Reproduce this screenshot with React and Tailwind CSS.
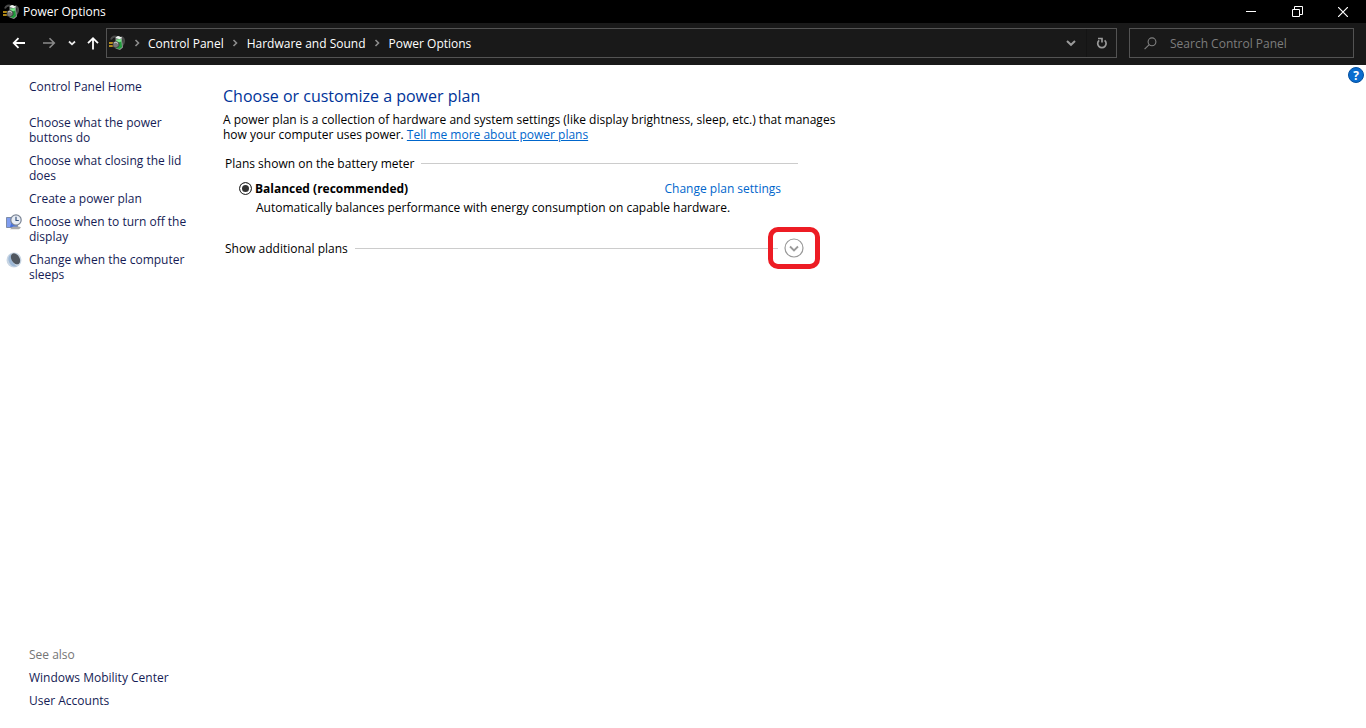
import { useState } from "react";

const breadcrumbs = ["Control Panel", "Hardware and Sound", "Power Options"];

const tasks = [
  { lines: ["Choose what the power", "buttons do"] },
  { lines: ["Choose what closing the lid", "does"] },
  { lines: ["Create a power plan"] },
  { lines: ["Choose when to turn off the", "display"], icon: DisplayClockIcon },
  { lines: ["Change when the computer", "sleeps"], icon: MoonIcon },
];

export default function App() {
  return (
    <div className="flex min-h-screen flex-col bg-white font-['Open_Sans','Noto_Sans',sans-serif] text-[12px] leading-[15px] text-black">
      <TitleBar />
      <NavigationBar />
      <div className="relative flex flex-1">
        <Sidebar />
        <PowerPlans />
        <button aria-label="Help" className="absolute top-[2px] right-[2px]">
          <HelpIcon />
        </button>
      </div>
    </div>
  );
}

function TitleBar() {
  return (
    <header className="flex h-[23px] items-center bg-black text-white">
      <div className="flex flex-1 items-center gap-1 pl-[3px]">
        <PowerIcon />
        <span>Power Options</span>
      </div>
      <button aria-label="Minimize" className="flex h-full w-[46px] items-center justify-center">
        <svg width="10" height="10" viewBox="0 0 10 10"><path d="M0 4.5h10" stroke="#fff" /></svg>
      </button>
      <button aria-label="Restore" className="flex h-full w-[46px] items-center justify-center">
        <svg width="11" height="11" viewBox="0 0 11 11" fill="none" stroke="#fff">
          <path d="M.5 3.5h7v7h-7zM2.5 3.5v-3h8v8h-3" />
        </svg>
      </button>
      <button aria-label="Close" className="flex h-full w-[46px] items-center justify-center">
        <svg width="10" height="10" viewBox="0 0 10 10"><path d="M0 0l10 10M10 0L0 10" stroke="#fff" strokeWidth="1.2" /></svg>
      </button>
    </header>
  );
}

function NavigationBar() {
  return (
    <nav className="flex h-[42px] items-center bg-[#191919] pr-3 pb-[2px] text-white">
      <div className="flex w-[106px] shrink-0 items-center pl-3">
        <button aria-label="Back">
          <svg width="14" height="14" viewBox="0 0 14 14" fill="none" stroke="#fff" strokeWidth="1.8">
            <path d="M13 7H2M6.500 2.200L1.700 7l4.800 4.800" />
          </svg>
        </button>
        <button aria-label="Forward" className="ml-4">
          <svg width="14" height="14" viewBox="0 0 14 14" fill="none" stroke="#8a8a8a" strokeWidth="1.600">
            <path d="M1 7h11M7.500 2.200L12.300 7l-4.800 4.800" />
          </svg>
        </button>
        <button aria-label="Recent locations" className="ml-3">
          <svg width="8" height="8" viewBox="0 0 8 8" fill="none" stroke="#e8e8e8" strokeWidth="1.8">
            <path d="M1 2.500l3 2.800 3-2.800" />
          </svg>
        </button>
        <button aria-label="Up" className="ml-[10px]">
          <svg width="14" height="14" viewBox="0 0 14 14" fill="none" stroke="#fff" strokeWidth="1.8">
            <path d="M7 13.500V2.500M2 7.200l5-5 5 5" />
          </svg>
        </button>
      </div>

      <div className="flex h-[30px] min-w-0 flex-1 items-center border border-[#535353] pl-[2px]">
        <PowerIcon />
        {breadcrumbs.map((crumb) => (
          <div key={crumb} className="flex items-center">
            <span className="flex w-[23px] justify-center">
              <svg width="6" height="8" viewBox="0 0 6 8" fill="none" stroke="#8c8c8c" strokeWidth="1.600">
                <path d="M1.500 1l3 3-3 3" />
              </svg>
            </span>
            <a href="#" className="whitespace-nowrap">{crumb}</a>
          </div>
        ))}
        <button aria-label="Previous locations" className="ml-auto flex h-full w-[30px] items-center justify-center">
          <svg width="10" height="8" viewBox="0 0 10 8" fill="none" stroke="#9a9a9a" strokeWidth="2">
            <path d="M1 2l4 3.800L9 2" />
          </svg>
        </button>
        <button aria-label="Refresh" className="flex h-full w-[30px] items-center justify-center border-l border-[#141414]">
          <svg width="12" height="12" viewBox="0 0 12 12" fill="none" stroke="#9a9a9a" strokeWidth="1.700">
            <path d="M8.600 3.300A4.200 4.200 0 1 1 3.200 3.300M2 1.500h4v4" />
          </svg>
        </button>
      </div>

      <label className="ml-3 flex h-[30px] w-[225px] shrink-0 items-center border border-[#535353] pl-[14px]">
        <svg width="13" height="13" viewBox="0 0 13 13" fill="none" stroke="#808080" strokeWidth="1.100">
          <circle cx="8" cy="4.800" r="3.900" />
          <path d="M5.200 7.600L.6 12.200" />
        </svg>
        <input
          type="text"
          aria-label="Search Control Panel"
          placeholder="Search Control Panel"
          className="ml-[13px] min-w-0 flex-1 bg-transparent outline-none placeholder:text-[#7d7d7d]"
        />
      </label>
    </nav>
  );
}

function Sidebar() {
  return (
    <aside className="flex w-[223px] shrink-0 flex-col pt-[14px] pb-5 text-[#151c55]">
      <a href="#" className="ml-[29px]">Control Panel Home</a>
      <ul className="mt-[21px] flex flex-col gap-2">
        {tasks.map(({ lines, icon: Icon }) => (
          <li key={lines[0]} className="flex pl-[6px]">
            <span className="w-[23px] shrink-0">{Icon && <Icon />}</span>
            <a href="#" className="whitespace-nowrap">
              {lines.map((line) => <span key={line} className="block">{line}</span>)}
            </a>
          </li>
        ))}
      </ul>
      <div className="mt-auto ml-[29px] flex flex-col items-start gap-2">
        <h2 className="text-[#757575]">See also</h2>
        <a href="#">Windows Mobility Center</a>
        <a href="#">User Accounts</a>
      </div>
    </aside>
  );
}

function PowerPlans() {
  const [plan, setPlan] = useState("balanced");

  return (
    <main className="max-w-[597px] flex-1 pt-5">
      <h1 className="text-[16px] leading-[22px] text-[#003399]">Choose or customize a power plan</h1>
      <p className="mt-[5px] whitespace-nowrap">
        A power plan is a collection of hardware and system settings (like display brightness, sleep, etc.) that manages
        <br />
        how your computer uses power.{" "}
        <a href="#" className="text-[#0066cc] underline">Tell me more about power plans</a>
      </p>

      <section className="mt-[14px] mr-[22px] ml-[2px]">
        <div className="flex items-center gap-[7px]">
          <h2>Plans shown on the battery meter</h2>
          <span className="h-px flex-1 bg-[#cccccc]" />
        </div>
        <div className="mt-[10px] flex items-center pr-[17px] pl-[14px]">
          <input
            id="balanced"
            type="radio"
            name="plan"
            checked={plan === "balanced"}
            onChange={() => setPlan("balanced")}
            className="h-[13px] w-[13px] appearance-none rounded-full border border-[#333333] bg-[#333333] shadow-[inset_0_0_0_2px_white]"
          />
          <label htmlFor="balanced" className="ml-[3px] font-bold">Balanced (recommended)</label>
          <a href="#" className="ml-auto text-[#0066cc]">Change plan settings</a>
        </div>
        <p className="mt-1 pl-[31px] whitespace-nowrap">
          Automatically balances performance with energy consumption on capable hardware.
        </p>
      </section>

      <section className="mt-3 ml-[2px] flex items-center">
        <h2>Show additional plans</h2>
        <span className="ml-[7px] h-px flex-1 bg-[#cccccc]" />
        <button
          aria-label="Show additional plans"
          aria-expanded="false"
          className="-ml-[10px] flex h-[42px] w-[52px] items-center justify-center rounded-[10px] border-[5px] border-[#ed1c24]"
        >
          <svg width="20" height="20" viewBox="0 0 20 20" fill="none" stroke="#999">
            <circle cx="10" cy="10" r="9" strokeWidth="1.200" />
            <path d="M6 8.500l4 4 4-4" strokeWidth="1.800" />
          </svg>
        </button>
      </section>
    </main>
  );
}

// --- Icons ---

function PowerIcon() {
  return (
    <svg width="16" height="16" viewBox="0 0 16 16" className="shrink-0">
      <path d="M2 4.500C3 1.500 6 1 8 2M12 2c3.500 1 4 5 1.500 8" fill="none" stroke="#4a4a4a" strokeWidth="2" />
      <path d="M6.500 2.500L9 1l4 1.500 1 10-3 2.500-4.500-1.500z" fill="#8d9791" />
      <path d="M6.500 2.500L9 1l4 1.500-2.500 1.700z" fill="#f2f5f2" />
      <path d="M7 5l5-1 1 8-2.500 2L7 13z" fill="#1f9d3a" />
      <path d="M7 5l5-1 .3 2.500L7 8z" fill="#7be28a" />
      <path d="M0 8h5M0 11h5" stroke="#e8b21c" strokeWidth="1.400" />
      <path d="M4 7.500L7 6l3 2v3l-3 2-3-1.200z" fill="#777" stroke="#333" strokeWidth=".7" />
      <path d="M5 8l2-1 2 1.500" fill="none" stroke="#ccc" />
    </svg>
  );
}

function DisplayClockIcon() {
  return (
    <svg width="16" height="16" viewBox="0 0 16 16">
      <path d="M.5 3.500h11v10h-11z" fill="#4872dc" stroke="#7d8ca8" />
      <path d="M1 4l6 0-3 9H1z" fill="#7f9df0" />
      <path d="M4 15.200h9l2-1.700-2-1H7z" fill="#aaa" />
      <circle cx="10" cy="6" r="5.200" fill="#e8edf5" stroke="#7a8494" strokeWidth="1.200" />
      <path d="M10 2.800V6.500h2.800" fill="none" stroke="#37527a" strokeWidth="1.200" />
    </svg>
  );
}

function MoonIcon() {
  return (
    <svg width="16" height="16" viewBox="0 0 16 16">
      <circle cx="8" cy="8" r="7.500" fill="#c9d6e4" />
      <path d="M5 2A7 7 0 0 0 11 14.200C7 12 4.500 7 5 2z" fill="#9db8d6" />
      <ellipse cx="9.500" cy="6.800" rx="4" ry="6" transform="rotate(-32 9.500 6.800)" fill="#505760" />
    </svg>
  );
}

function HelpIcon() {
  return (
    <svg width="16" height="16" viewBox="0 0 16 16">
      <circle cx="8" cy="8" r="7.500" fill="#0a6cce" stroke="#05509e" />
      <text x="8" y="12.500" textAnchor="middle" fontSize="12" fontWeight="700" fill="#fff">?</text>
    </svg>
  );
}
